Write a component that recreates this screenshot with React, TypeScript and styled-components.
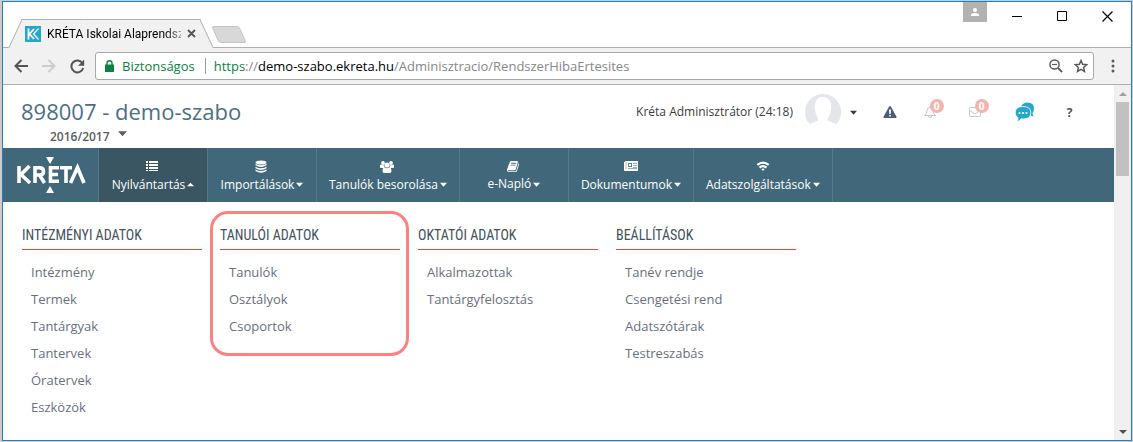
import React from "react";
import styled, { createGlobalStyle, css } from "styled-components";

const colors = {
  frame: "#1f7fcb",
  chrome: "#f1f1f1",
  line: "#b0b0b0",
  nav: "#41687a",
  navActive: "#3a5663",
  accent: "#23a8cc",
  secure: "#0b8043",
};

const GlobalStyle = createGlobalStyle`
  * { box-sizing: border-box; }
  html, body, #root { height: 100%; }
  body { margin: 0; background: #cccccc; font-family: "Open Sans", sans-serif; }
  button, select { font-family: inherit; border: 0; padding: 0; background: none; color: inherit; }
  ul { list-style: none; margin: 0; padding: 0; }
  a { color: inherit; text-decoration: none; }
  svg { display: block; flex: none; }
`;

const Desktop = styled.div`
  min-height: 100%;
  display: flex;
  padding: 1px 1px 1px 2px;
`;

const Window = styled.div`
  flex: 1;
  min-width: 0;
  display: flex;
  flex-direction: column;
  background: #fff;
  border: 1px solid ${colors.frame};
`;

const TitleBar = styled.div`
  height: 46px;
  display: flex;
  align-items: flex-end;
  border-bottom: 1px solid ${colors.line};
`;

const Tab = styled.div`
  position: relative;
  z-index: 0;
  width: 192px;
  height: 29px;
  margin: 0 0 -1px 12px;
  padding: 0 11px 0 10px;
  display: flex;
  align-items: center;
  gap: 6px;
  &::before,
  &::after {
    content: "";
    position: absolute;
    z-index: -1;
    top: 0;
    bottom: 0;
    width: 60%;
    background: ${colors.chrome};
    border-top: 1px solid ${colors.line};
  }
  &::before {
    left: 0;
    border-left: 1px solid ${colors.line};
    transform: skewX(-25deg);
  }
  &::after {
    right: 0;
    border-right: 1px solid ${colors.line};
    transform: skewX(25deg);
  }
`;

const TabTitle = styled.span`
  flex: 1;
  min-width: 0;
  white-space: nowrap;
  font-family: Roboto, sans-serif;
  font-size: 12px;
  line-height: 18px;
  color: #000;
  mask-image: linear-gradient(to right, #000 88%, rgba(0, 0, 0, 0.3));
`;

const NewTab = styled.button`
  width: 28px;
  height: 17px;
  margin: 0 0 4px 8px;
  background: #d8d8d8;
  border: 1px solid #c4c4c4;
  border-radius: 3px;
  transform: skewX(24deg);
`;

const WindowControls = styled.div`
  align-self: stretch;
  margin-left: auto;
  padding-right: 1px;
  display: flex;
  align-items: flex-start;
`;

const ProfileButton = styled.button`
  width: 24px;
  height: 20px;
  margin-right: 8px;
  display: grid;
  place-items: center;
  background: #b2b2b2;
`;

const WindowButton = styled.button`
  width: 45px;
  height: 29px;
  display: grid;
  place-items: center;
`;

const Toolbar = styled.div`
  height: 37px;
  display: flex;
  align-items: center;
  background: ${colors.chrome};
  border-bottom: 1px solid ${colors.line};
`;

const ToolButton = styled.button`
  width: 28px;
  height: 28px;
  display: grid;
  place-items: center;
`;

const ToolGroup = styled.div`
  display: flex;
  padding: 0 4px;
`;

const AddressBar = styled.div`
  flex: 1;
  min-width: 0;
  height: 28px;
  display: flex;
  align-items: center;
  padding-left: 9px;
  background: #fff;
  border: 1px solid #a9a9a9;
  border-radius: 3px;
  font-size: 13px;
  line-height: 20px;
  white-space: nowrap;
`;

const Secure = styled.span`
  margin: 0 10px 0 8px;
  color: ${colors.secure};
`;

const Url = styled.span`
  flex: 1;
  min-width: 0;
  overflow: hidden;
  padding-left: 8px;
  border-left: 1px solid #999;
  line-height: 16px;
  color: #85888c;
  em { font-style: normal; color: ${colors.secure}; }
  strong { font-weight: 400; color: #000; }
`;

const BarButton = styled.button`
  width: 25px;
  height: 24px;
  display: grid;
  place-items: center;
`;

const MenuButton = styled(ToolButton)`
  width: 37px;
`;

const Viewport = styled.div`
  flex: 1;
  display: flex;
`;

const Page = styled.main`
  flex: 1;
  min-width: 0;
`;

const Scrollbar = styled.div`
  width: 17px;
  display: flex;
  flex-direction: column;
  align-items: center;
  background: #f0f0f0;
`;

const ScrollArrow = styled.button`
  width: 17px;
  height: 17px;
  display: grid;
  place-items: center;
`;

const ScrollThumb = styled.div`
  width: 13px;
  height: 74px;
  margin-bottom: auto;
  background: #c1c1c1;
`;

const Header = styled.header`
  min-height: 63px;
  display: flex;
  justify-content: space-between;
  padding: 10px 22px 0 18px;
`;

const School = styled.h1`
  margin: 0;
  font-size: 22px;
  line-height: 32px;
  font-weight: 400;
  color: #4a7084;
`;

const YearPicker = styled.label`
  display: flex;
  gap: 8px;
  padding-left: 29px;
  color: #5c5c64;
  svg { margin-top: 2px; }
`;

const YearSelect = styled.select`
  appearance: none;
  height: 20px;
  font-size: 12px;
  line-height: 20px;
  font-weight: 600;
`;

const UserBar = styled.div`
  display: flex;
  align-items: center;
  height: 34px;
`;

const UserButton = styled.button`
  display: flex;
  align-items: center;
  margin-right: 10px;
  font-size: 12px;
  line-height: 18px;
  color: #3c3c3c;
  white-space: nowrap;
`;

const Avatar = styled.span`
  margin: 0 9px 0 12px;
`;

const HeaderButton = styled.button`
  width: 45px;
  height: 30px;
  display: grid;
  place-items: center;
  color: #4a5568;
  font-size: 12px;
  font-weight: 700;
`;

const BadgeAnchor = styled.span`
  position: relative;
  padding-right: 10px;
`;

const Badge = styled.span`
  position: absolute;
  left: 7px;
  top: -6px;
  width: 14px;
  height: 14px;
  border-radius: 7px;
  background: #f2b5ae;
  color: #fff;
  font-size: 10px;
  line-height: 14px;
  text-align: center;
`;

const Nav = styled.nav`
  display: flex;
  min-height: 54px;
  background: ${colors.nav};
`;

const Logo = styled.a`
  width: 96px;
  display: grid;
  place-items: center;
  border-right: 1px solid #567a8a;
`;

const NavItem = styled.button<{ $active?: boolean }>`
  min-width: 109px;
  padding: 3px 12px 0;
  display: flex;
  flex-direction: column;
  align-items: center;
  justify-content: center;
  gap: 2px;
  border-right: 1px solid #567a8a;
  font-size: 12px;
  line-height: 18px;
  color: #fff;
  white-space: nowrap;
  ${(p) => p.$active && css`background: ${colors.navActive};`}
`;

const NavLabel = styled.span`
  display: flex;
  align-items: center;
  gap: 2px;
`;

const Menu = styled.div`
  display: flex;
  flex-wrap: wrap;
  gap: 18px;
  padding: 22px 19px 0;
`;

const Column = styled.section`
  position: relative;
  width: 180px;
`;

const Highlight = styled.div`
  position: absolute;
  inset: -13px -9px auto -10px;
  height: 145px;
  border: 3px solid #ff8080;
  border-radius: 18px;
  pointer-events: none;
`;

const ColumnTitle = styled.h2`
  margin: 0 0 9px;
  padding-bottom: 3px;
  border-bottom: 1px solid #dd4b39;
  font-family: "Roboto Condensed", "Liberation Sans Narrow", Roboto, sans-serif;
  font-size: 14px;
  line-height: 22px;
  font-weight: 400;
  color: #44525c;
  white-space: nowrap;
`;

const MenuLink = styled.a`
  display: block;
  padding-left: 9px;
  font-size: 13px;
  line-height: 27px;
  color: #687080;
`;

const Caret = ({ up = false, size = 7 }: { up?: boolean; size?: number }) => (
  <svg width={size} height={size} viewBox="0 0 8 8" fill="currentColor" aria-hidden="true">
    <path d={up ? "M0 6h8L4 2z" : "M0 2h8L4 6.500z"} />
  </svg>
);

const ListIcon = () => (
  <svg width="14" height="14" viewBox="0 0 14 14" fill="#fff" aria-hidden="true">
    <path d="M0 1h2v2H0zM3 1h9v2H3zM0 4h2v2H0zM3 4h9v2H3zM0 7h2v2H0zM3 7h9v2H3zM0 10h2v1H0zM3 10h9v1H3z" />
  </svg>
);

const DatabaseIcon = () => (
  <svg width="14" height="14" viewBox="0 0 14 14" fill="#fff" aria-hidden="true">
    <ellipse cx="6" cy="2.500" rx="5.500" ry="2" />
    <path d="M.5 3.800q5.500 3 11 0v1.500q-5.500 3.400-11 0zM.5 6.700q5.500 3 11 0v1.500q-5.500 3.400-11 0zM.5 9.600q5.500 3 11 0v1.500q-5.500 3.400-11 0z" />
  </svg>
);

const UsersIcon = () => (
  <svg width="16" height="14" viewBox="0 0 16 14" fill="#fff" aria-hidden="true">
    <circle cx="3" cy="3" r="1.900" />
    <circle cx="11" cy="3" r="1.900" />
    <circle cx="7" cy="5" r="2.600" />
    <path d="M0 7.200V6q0-1.400 1-1.400 2 1 2.900.6Q4 6.500 4.700 7.300L3.300 8H1Q0 8 0 7.200zM14 7.200V6q0-1.400-1-1.400-2 1-2.900.6-.1 1.300-.8 2.100l1.400.7H13q1 0 1-.8zM2.500 11.200Q2.500 7.400 4.600 7.400 7 9 9.400 7.400q2.100 0 2.100 3.800Q11.500 13 9.900 13H4.100q-1.600 0-1.600-1.800z" />
  </svg>
);

const BookIcon = () => (
  <svg width="13" height="13" viewBox="0 0 1792 1792" fill="#fff" aria-hidden="true">
    <path d="M1639 478q40 57 18 129l-275 906q-19 64-76.500 107.500t-122.500 43.500h-923q-77 0-148.500-53.500t-99.500-131.500q-24-67-2-127 0-4 3-27t4-37q1-8-3-21.500t-3-19.500q2-11 8-21t16.500-23.500 16.500-23.500q23-38 45-91.500t30-91.500q3-10 .5-30t-.5-28q3-11 17-28t17-23q21-36 42-92t25-90q1-9-2.500-32t.5-28q4-13 22-30.500t22-22.500q19-26 42.500-84.500t27.500-96.500q1-8-3-25.500t-2-26.500q2-8 9-18t18-23 17-21q8-12 16.500-30.500t15-35 16-36 19.500-32 26.500-23.500 36-11.500 47.500 5.500l-1 3q38-9 51-9h761q74 0 114 56t18 130l-274 906q-36 119-71.500 153.500t-128.500 34.500h-869q-27 0-38 15-11 16-1 43 24 70 144 70h923q29 0 56-15.500t35-41.500l300-987q7-22 5-57 38 15 59 43zm-1064 2q-4 13 2 22.500t20 9.500h608q13 0 25.500-9.500t16.500-22.500l21-64q4-13-2-22.500t-20-9.500h-608q-13 0-25.500 9.500t-16.500 22.500zm-83 256q-4 13 2 22.500t20 9.500h608q13 0 25.500-9.500t16.500-22.500l21-64q4-13-2-22.500t-20-9.500h-608q-13 0-25.500 9.500t-16.500 22.500z" />
  </svg>
);

const NewspaperIcon = () => (
  <svg width="16" height="14" viewBox="0 0 16 14" aria-hidden="true">
    <path d="M2 1h13v10H2q-1 0-1-1V2h1z" fill="#fff" />
    <path d="M3 2v7" stroke="#e0b070" fill="none" />
    <path d="M5 3h4v4H5z" fill="#3f8fae" />
    <path d="M6 4h2v2H6z" fill="#fff" />
    <path d="M10 3.500h4M10 5.500h4M10 7.500h4M5 8.500h9" stroke="#8fb0bd" fill="none" />
  </svg>
);

const WifiIcon = () => (
  <svg width="14" height="14" viewBox="0 0 16 16" fill="none" stroke="#fff" strokeWidth="2.500" aria-hidden="true">
    <path d="M1.500 5.600q6.500-5.400 13 0M4 8.600q4-3.200 8 0" />
    <path d="M6 10.400q2-1.300 4 0L8 12.600z" fill="#fff" stroke="none" />
  </svg>
);

const KretaLogo = () => (
  <svg width="70" height="38" viewBox="0 0 70 38" fill="none" stroke="#fff" strokeWidth="3.600" aria-hidden="true">
    <path d="M3 10v17M13.500 10 5 18.500l9 8.500M19 27V11.800h4.500q4 0 4 3.600t-4 3.600H19M23.500 19l5 8M43 11.800h-8.500v13.500H43M34.500 18.500h7.500M44 11.800h12M50 12v15M54.500 27l7-15.500L68 27" />
    <path d="M30 1h8l-4 7zM30 37h8l-4-7z" fill="#fff" stroke="none" />
  </svg>
);

const navItems = [
  { label: "Nyilvántartás", Icon: ListIcon, active: true },
  { label: "Importálások", Icon: DatabaseIcon },
  { label: "Tanulók besorolása", Icon: UsersIcon },
  { label: "e-Napló", Icon: BookIcon },
  { label: "Dokumentumok", Icon: NewspaperIcon },
  { label: "Adatszolgáltatások", Icon: WifiIcon },
];

const columns = [
  { title: "INTÉZMÉNYI ADATOK", links: ["Intézmény", "Termek", "Tantárgyak", "Tantervek", "Óratervek", "Eszközök"] },
  { title: "TANULÓI ADATOK", links: ["Tanulók", "Osztályok", "Csoportok"], highlighted: true },
  { title: "OKTATÓI ADATOK", links: ["Alkalmazottak", "Tantárgyfelosztás"] },
  { title: "BEÁLLÍTÁSOK", links: ["Tanév rendje", "Csengetési rend", "Adatszótárak", "Testreszabás"] },
];

const BrowserChrome = () => (
  <>
    <TitleBar>
      <Tab>
        <svg width="16" height="16" viewBox="0 0 16 16" aria-hidden="true">
          <path d="M0 0h16v16H0z" fill={colors.accent} />
          <path d="M3.500 2.500v11M9 3 4.500 8 9 13" fill="none" stroke="#fff" strokeWidth="1.800" />
          <path d="M13.500 2.500 8.500 8l5 5.500" fill="none" stroke="#fff" strokeWidth="1.200" />
        </svg>
        <TabTitle>KRÉTA Iskolai Alaprendsz</TabTitle>
        <button aria-label="Lap bezárása">
          <svg width="9" height="9" viewBox="0 0 9 9" stroke="#555" strokeWidth="1.800">
            <path d="m1 1 7 7M8 1 1 8" />
          </svg>
        </button>
      </Tab>
      <NewTab aria-label="Új lap" />
      <WindowControls>
        <ProfileButton aria-label="Profil">
          <svg width="10" height="10" viewBox="0 0 10 10" fill="#fff">
            <circle cx="5" cy="3" r="2" />
            <path d="M1 9V8q0-2 4-2t4 2v1z" />
          </svg>
        </ProfileButton>
        <WindowButton aria-label="Kis méret">
          <svg width="11" height="11" viewBox="0 0 11 11" stroke="#000">
            <path d="M0 5.500h10" />
          </svg>
        </WindowButton>
        <WindowButton aria-label="Teljes méret">
          <svg width="11" height="11" viewBox="0 0 11 11" stroke="#000" fill="none">
            <path d="M.5.5h9v9h-9z" />
          </svg>
        </WindowButton>
        <WindowButton aria-label="Bezárás">
          <svg width="11" height="11" viewBox="0 0 11 11" stroke="#000" strokeWidth="1.200">
            <path d="m.5.5 10 10M10.500.5l-10 10" />
          </svg>
        </WindowButton>
      </WindowControls>
    </TitleBar>
    <Toolbar>
      <ToolGroup>
        <ToolButton aria-label="Vissza">
          <svg width="14" height="14" viewBox="0 0 14 14" fill="none" stroke="#555" strokeWidth="2">
            <path d="M14 7H2M7.500 1 1.500 7l6 6" />
          </svg>
        </ToolButton>
        <ToolButton aria-label="Előre">
          <svg width="14" height="14" viewBox="0 0 14 14" fill="none" stroke="#ccc" strokeWidth="2">
            <path d="M0 7h12M6.500 1l6 6-6 6" />
          </svg>
        </ToolButton>
        <ToolButton aria-label="Frissítés">
          <svg width="15" height="15" viewBox="0 0 15 15" fill="none">
            <path d="M12.500 4.200A6 6 0 1 0 13.200 9" stroke="#555" strokeWidth="2" />
            <path d="M14.200.5v6.200H8z" fill="#555" />
          </svg>
        </ToolButton>
      </ToolGroup>
      <AddressBar>
        <svg width="9" height="12" viewBox="0 0 9 12" aria-hidden="true">
          <path d="M0 4.500h9V12H0z" fill={colors.secure} />
          <path d="M2 5V3q0-2.200 2.500-2.200T7 3v2" fill="none" stroke={colors.secure} strokeWidth="1.400" />
        </svg>
        <Secure>Biztonságos</Secure>
        <Url>
          <em>https</em>://<strong>demo-szabo.ekreta.hu</strong>/Adminisztracio/RendszerHibaErtesites
        </Url>
        <BarButton aria-label="Nagyítás">
          <svg width="14" height="14" viewBox="0 0 14 14" fill="none" stroke="#5a5a5a">
            <circle cx="5.500" cy="5.500" r="4.600" strokeWidth="1.500" />
            <path d="M3 5.500h5" strokeWidth="1.200" />
            <path d="m9 9 4 4" strokeWidth="1.800" />
          </svg>
        </BarButton>
        <BarButton aria-label="Könyvjelző">
          <svg width="14" height="14" viewBox="0 0 14 14" fill="none" stroke="#5a5a5a" strokeWidth="1.500">
            <path d="m7 1.500 1.600 3.800 4.100.4-3.100 2.700.9 4L7 10.300l-3.500 2.100.9-4-3.100-2.700 4.100-.4z" />
          </svg>
        </BarButton>
      </AddressBar>
      <MenuButton aria-label="Menü">
        <svg width="4" height="14" viewBox="0 0 4 14" fill="#5a5a5a">
          <circle cx="2" cy="2" r="1.500" />
          <circle cx="2" cy="7" r="1.500" />
          <circle cx="2" cy="12" r="1.500" />
        </svg>
      </MenuButton>
    </Toolbar>
  </>
);

const PageHeader = () => (
  <Header>
    <div>
      <School>898007 - demo-szabo</School>
      <YearPicker>
        <YearSelect aria-label="Tanév" defaultValue="2016/2017">
          <option>2016/2017</option>
        </YearSelect>
        <Caret size={9} />
      </YearPicker>
    </div>
    <UserBar>
      <UserButton>
        Kréta Adminisztrátor (24:18)
        <Avatar>
          <svg width="36" height="36" viewBox="0 0 36 36" aria-hidden="true">
            <path
              d="M4.500 30A18 18 0 1 1 31.500 30Q28 28.500 23.500 27q-1-1-.3-3.500Q26 20 26.300 12.500 26 3 18 3T9.700 12.500Q10 20 12.800 23.500q.7 2.500-.3 3.500Q8 28.500 4.500 30z"
              fill="#e3e6eb"
            />
          </svg>
        </Avatar>
        <Caret />
      </UserButton>
      <HeaderButton aria-label="Figyelmeztetések">
        <svg width="14" height="12" viewBox="0 0 14 12" aria-hidden="true">
          <path d="M7 0q.6 0 1 .7l5.500 10q.4 1.300-.8 1.300H1.300Q.1 12 .5 10.700L6 .7Q6.400 0 7 0z" fill="#4d5b73" />
          <path d="M6 3.500h2L7.700 8H6.300zM6.200 9h1.600v1.500H6.200z" fill="#fff" />
        </svg>
      </HeaderButton>
      <HeaderButton aria-label="Értesítések">
        <BadgeAnchor>
          <svg width="14" height="14" viewBox="0 0 14 14" fill="none" stroke="#c3c8cf" aria-hidden="true">
            <path d="M1.500 10.500Q4 8.500 4 5.500 4 2.500 7 2.500t3 3q0 3 2.500 5zM7 1v1.500M5.500 11q0 1.500 1.500 1.500T8.500 11" />
          </svg>
          <Badge>0</Badge>
        </BadgeAnchor>
      </HeaderButton>
      <HeaderButton aria-label="Üzenetek">
        <BadgeAnchor>
          <svg width="14" height="14" viewBox="0 0 14 14" fill="none" stroke="#c3c8cf" aria-hidden="true">
            <path d="M2.500 2.500h9q1 0 1 1v7q0 1-1 1h-9q-1 0-1-1v-7q0-1 1-1zM1.500 5.500 7 9l5.500-3.500" />
          </svg>
          <Badge>0</Badge>
        </BadgeAnchor>
      </HeaderButton>
      <HeaderButton aria-label="Beszélgetés">
        <svg width="20" height="20" viewBox="0 0 20 20" aria-hidden="true">
          <path d="M6 4.500Q8 .5 12.500.5q6.500 0 6.500 6 0 2.500-1.500 4.500.2 2 1.200 3.500-2.200-.2-3.700-1.800z" fill={colors.accent} />
          <path
            d="M8 4.500q7.800 0 7.800 6.300T8 17q-1 0-2-.2-1 2.200-3.800 3 .9-2 .6-4.300Q.2 13.800.2 10.800.2 4.500 8 4.500z"
            fill={colors.accent}
            stroke="#fff"
            strokeWidth=".8"
          />
          <g fill="#fff">
            <circle cx="4.500" cy="11" r="1.100" />
            <circle cx="8" cy="11" r="1.100" />
            <circle cx="11.500" cy="11" r="1.100" />
          </g>
        </svg>
      </HeaderButton>
      <HeaderButton>?</HeaderButton>
    </UserBar>
  </Header>
);

export default function App() {
  return (
    <Desktop>
      <GlobalStyle />
      <Window>
        <BrowserChrome />
        <Viewport>
          <Page>
            <PageHeader />
            <Nav>
              <Logo href="#" aria-label="KRÉTA">
                <KretaLogo />
              </Logo>
              {navItems.map(({ label, Icon, active }) => (
                <NavItem key={label} $active={active}>
                  <Icon />
                  <NavLabel>
                    {label}
                    <Caret up={active} />
                  </NavLabel>
                </NavItem>
              ))}
            </Nav>
            <Menu>
              {columns.map((column) => (
                <Column key={column.title}>
                  <ColumnTitle>{column.title}</ColumnTitle>
                  <ul>
                    {column.links.map((link) => (
                      <li key={link}>
                        <MenuLink href="#">{link}</MenuLink>
                      </li>
                    ))}
                  </ul>
                  {column.highlighted && <Highlight />}
                </Column>
              ))}
            </Menu>
          </Page>
          <Scrollbar>
            <ScrollArrow aria-label="Görgetés fel">
              <svg width="8" height="4" viewBox="0 0 8 4" fill="#a0a0a0">
                <path d="M0 4h8L4 0z" />
              </svg>
            </ScrollArrow>
            <ScrollThumb />
            <ScrollArrow aria-label="Görgetés le">
              <svg width="8" height="4" viewBox="0 0 8 4" fill="#505050">
                <path d="M0 0h8L4 4z" />
              </svg>
            </ScrollArrow>
          </Scrollbar>
        </Viewport>
      </Window>
    </Desktop>
  );
}
